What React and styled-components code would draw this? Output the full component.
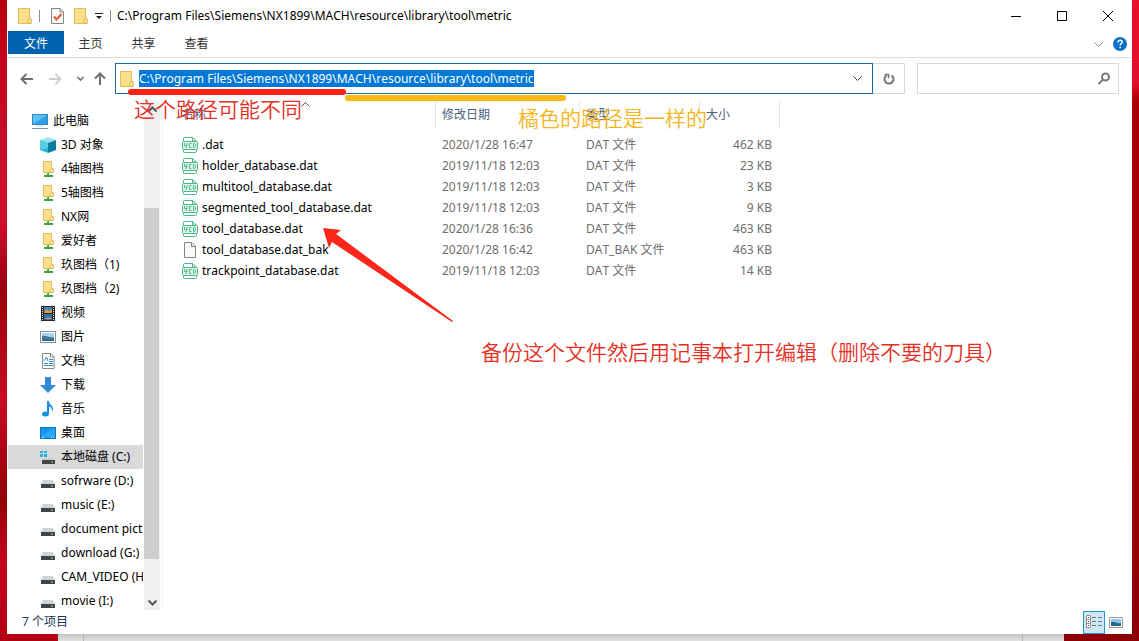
import { useState } from "react";
import styled, { createGlobalStyle } from "styled-components";

const PATH = "C:\\Program Files\\Siemens\\NX1899\\MACH\\resource\\library\\tool\\metric";

const GlobalStyle = createGlobalStyle`
  * {
    box-sizing: border-box;
  }
  body {
    margin: 0;
    font-family: "Noto Sans", "Noto Sans CJK SC", sans-serif;
    font-size: 12px;
    line-height: 16px;
    font-kerning: none;
    color: #000;
  }
  button,
  input {
    font: inherit;
    font-kerning: none;
    color: inherit;
    border: 0;
    padding: 0;
    background: none;
  }
  svg {
    display: block;
    flex: none;
  }
`;

const Desktop = styled.div`
  position: relative;
  height: 100vh;
  overflow: hidden;
  display: flex;
  flex-direction: column;
  background:
    linear-gradient(#e8102a 0, #e0102a 84px, #ab0004 100px, #a80006 300px, #8c0004) right / 50% 100% no-repeat,
    linear-gradient(#b8000c 0, #c20418 60px, #c8102a 150px, #d0102c 220px, #98000c 290px, #c80c24 400px, #900008 500px, #c4041c 560px, #b40010) left / 50% 100% no-repeat;
`;

const Window = styled.main`
  flex: 1;
  min-height: 0;
  margin: 0 7px;
  padding: 0 1px;
  display: flex;
  flex-direction: column;
  background: #fff;
`;

const Behind = styled.div`
  height: 7px;
  margin: 0 75px 0 58px;
  background: linear-gradient(#c4c4c4, #e2e2e2);
  display: flex;
  justify-content: space-between;
  padding: 0 41px 0 25px;

  &::before,
  &::after {
    content: "";
    width: 1px;
    background: #b4b4b4;
  }
`;

const TitleBar = styled.header`
  height: 31px;
  display: flex;
  align-items: center;
  padding-left: 10px;
`;

const QuickAccess = styled.div`
  display: flex;
  align-items: center;
  gap: 7px;
  margin-right: 6px;
`;

const Separator = styled.span`
  width: 1px;
  height: 12px;
  background: #8c8c8c;
`;

const Title = styled.h1`
  flex: 1;
  margin: 0;
  font-size: 12px;
  font-weight: 400;
`;

const IconButton = styled.button`
  display: flex;
  align-items: center;
  justify-content: center;
  width: ${(props) => props.$w || 16}px;
  height: ${(props) => props.$h || 16}px;
`;

const Ribbon = styled.nav`
  height: 27px;
  display: flex;
  align-items: flex-start;
  border-bottom: 1px solid #d9dde0;
`;

const Tab = styled.button`
  width: ${(props) => (props.$active ? 56 : 53)}px;
  height: 23px;
  padding-top: 2px;
  background: ${(props) => (props.$active ? "#0063b1" : "transparent")};
  color: ${(props) => (props.$active ? "#fff" : "#333")};
`;

const RibbonTools = styled.div`
  margin-left: auto;
  height: 26px;
  display: flex;
  align-items: center;
  gap: 6px;
  padding-right: 3px;
`;

const Navigation = styled.div`
  display: flex;
  align-items: center;
  padding: 5px 12px 7px 11px;
`;

const Arrows = styled.div`
  display: flex;
  align-items: center;
  width: 96px;
`;

const AddressBox = styled.div`
  flex: 1;
  min-width: 0;
  height: 31px;
  display: flex;
  align-items: center;
  padding: 0 7px 0 4px;
  gap: 5px;
  border: 1px solid #1d6aa8;

  button {
    margin-left: auto;
  }
`;

const AddressInput = styled.input`
  field-sizing: content;
  height: 17px;
  background: #0078d7;
  color: #fff;
  outline: none;
`;

const Refresh = styled.button`
  width: 32px;
  height: 31px;
  display: flex;
  align-items: center;
  justify-content: center;
  border: 1px solid #d9d9d9;
  border-left: 0;
`;

const SearchBox = styled.label`
  width: 202px;
  height: 31px;
  margin-left: 12px;
  padding: 0 7px;
  display: flex;
  align-items: center;
  border: 1px solid #d9d9d9;

  input {
    flex: 1;
    min-width: 0;
    outline: none;
  }
`;

const Content = styled.div`
  flex: 1;
  min-height: 0;
  display: flex;
`;

const Sidebar = styled.aside`
  display: flex;
  width: 155px;
  padding-right: 2px;
  border-right: 1px solid #f4f4f4;
`;

const Tree = styled.ul`
  flex: 1;
  min-width: 0;
  margin: 0;
  padding: 8px 0 0;
  overflow: hidden;
  list-style: none;
`;

const TreeItem = styled.li`
  height: 24px;
  display: flex;
  align-items: center;
  gap: 5px;
  margin-right: 1px;
  padding-left: ${(props) => (props.$root ? 24 : 32)}px;
  overflow: hidden;
  white-space: nowrap;
  background: ${(props) => (props.$selected ? "#d9d9d9" : "transparent")};
`;

const Scrollbar = styled.div`
  width: 16px;
  display: flex;
  flex-direction: column;
  background: #f0f0f0;
`;

const Track = styled.div`
  flex: 1;
  display: flex;
  flex-direction: column;

  &::before {
    content: "";
    flex: 91;
  }
  &::after {
    content: "";
    flex: 35;
  }
`;

const Thumb = styled.div`
  flex: 351;
  margin-right: 1px;
  background: #cdcdcd;
`;

const Files = styled.section`
  flex: 1;
  min-width: 0;
  padding-left: 19px;
  overflow: hidden;
`;

const FileTable = styled.table`
  width: 598px;
  table-layout: fixed;
  border-collapse: separate;
  border-spacing: 0;
  color: #6d6d6d;

  th,
  td {
    padding: 0 8px 0 6px;
    font-weight: 400;
    text-align: left;
    white-space: nowrap;
  }
  th {
    height: 28px;
    color: #4c607a;
    border-right: 1px solid #e5e5e5;
  }
  th:first-child,
  td:first-child {
    padding-left: 0;
  }
  td {
    height: 21px;
  }
  td:last-child {
    text-align: right;
  }
  tbody::before {
    content: "";
    display: block;
    height: 5px;
  }
`;

const SortHead = styled.span`
  position: relative;
  display: block;

  svg {
    position: absolute;
    left: 119px;
    top: -7px;
  }
`;

const FileName = styled.span`
  display: flex;
  align-items: center;
  gap: 4px;
  color: #000;
`;

const StatusBar = styled.footer`
  height: 24px;
  display: flex;
  align-items: center;
  padding: 0 4px 0 14px;
  color: #1e395b;
`;

const Views = styled.div`
  margin-left: auto;
  display: flex;
  align-items: center;
`;

const ViewButton = styled.button`
  width: 22px;
  height: 23px;
  display: flex;
  align-items: center;
  justify-content: center;
  border: 1px solid ${(props) => (props.$active ? "#2a94cf" : "transparent")};
  background: ${(props) => (props.$active ? "#cce8f6" : "transparent")};
`;

// hand-drawn marks over the window
const Note = styled.p`
  position: absolute;
  left: ${(props) => props.$x}px;
  top: ${(props) => props.$y}px;
  margin: 0;
  font-family: "Noto Sans CJK SC", sans-serif;
  font-weight: 350;
  font-size: 21px;
  line-height: 28px;
  white-space: nowrap;
  color: ${(props) => props.$color};
  pointer-events: none;
`;

const Underline = styled.div`
  position: absolute;
  left: ${(props) => props.$x}px;
  top: ${(props) => props.$y}px;
  width: ${(props) => props.$w}px;
  height: 6px;
  border-radius: 3px;
  background: ${(props) => props.$color};
  pointer-events: none;
`;

const ArrowMark = styled.svg`
  position: absolute;
  left: 322px;
  top: 227px;
  pointer-events: none;
`;

const Folder = () => (
  <svg width="14" height="16" viewBox="0 0 14 16">
    <path d="M.5.5h11v10h1.5v5H.5z" fill="#fbe08c" stroke="#e5bd55" />
    <path d="M11.5 10.500c-1.500 0-1.500 1-1.500 2v3h3v-4.500z" fill="#ffedae" stroke="#dfb349" />
  </svg>
);

const CheckDoc = () => (
  <svg width="13" height="16" viewBox="0 0 13 16">
    <path d="M.5.5h8.500l3.500 3.500v11.500H.5z" fill="#fafafa" stroke="#858585" />
    <path d="M9 .5V4h3.500" fill="none" stroke="#858585" />
    <path d="M3 8.500l2.500 3L10.500 6" fill="none" stroke="#e05a35" strokeWidth="2" />
  </svg>
);

const Chevron = ({ size = 9, dir = "down", color = "#555", width = 1 }) => (
  <svg width={size} height={size} viewBox="0 0 9 9">
    <path
      d={dir === "down" ? "M.5 2.500l4 4 4-4" : "M.5 6.500l4-4 4 4"}
      fill="none"
      stroke={color}
      strokeWidth={width}
    />
  </svg>
);

const NavArrow = ({ turn = 0, color = "#707070" }) => (
  <svg width="14" height="14" viewBox="0 0 14 14">
    <path
      d="M13 7H2M6.500 2L1.500 7l5 5"
      fill="none"
      stroke={color}
      strokeWidth="2"
      transform={`rotate(${turn} 7 7)`}
    />
  </svg>
);

const shapes = {
  pc: (
    <>
      <rect x=".5" y="1.500" width="15" height="10" fill="#59c3f5" stroke="#3586b8" />
      <path d="M1 11L15 2v9z" fill="#2c9fe6" />
      <path d="M5 13h6" stroke="#c5d5df" />
      <path d="M0 15.500h16" stroke="#7895a6" />
    </>
  ),
  cube: (
    <>
      <path d="M0 3l8-3 8 3-8 3z" fill="#9fe6f1" />
      <path d="M0 3l8 3v10l-8-3z" fill="#29b6d8" />
      <path d="M16 3L8 6v10l8-3z" fill="#087f9e" />
      <path d="M0 3l8 3v5L0 13z" fill="#58cee4" />
    </>
  ),
  netFolder: (
    <>
      <path d="M3.500.5h8v7h1.500v4H3.500z" fill="#fbe08c" stroke="#e3bb54" />
      <path d="M11 7.500h2v4h-3v-3z" fill="#ffedae" stroke="#dfb349" />
      <path d="M8 12v2" stroke="#48a653" strokeWidth="2" />
      <path d="M4 15h9" stroke="#36a345" strokeWidth="2" />
    </>
  ),
  video: (
    <>
      <rect x="1" y="1" width="14" height="15" fill="#262626" />
      <path d="M4 2h8v6H4z" fill="#4a7fc0" />
      <path d="M4 9h8v6H4z" fill="#3b6db4" />
      <path d="M4 7l3-3 2 2 3-2v4H4zM5 14l3-2 4 2z" fill="#cda339" />
      <path d="M2.500 2v13M13.500 2v13" stroke="#ddd" strokeDasharray="1 1" />
    </>
  ),
  image: (
    <>
      <rect x=".5" y="2.500" width="15" height="11" fill="#fff" stroke="#8c9298" />
      <path d="M2 4h12v8H2z" fill="#a5d5f0" />
      <path d="M2 7c4-1 7 2 12 1v4H2z" fill="#447b91" />
      <path d="M2 10.500h12V12H2z" fill="#28658f" />
    </>
  ),
  document: (
    <>
      <path d="M2.500.5h8.500l3 3v12H2.500z" fill="#fff" stroke="#87898c" />
      <path d="M10.500.5V4H14" fill="none" stroke="#87898c" />
      <path d="M4 8l2.500-4L8 8M9 6.500h4M9 8.500h4M4 10.500h4M9 10.500h4M4 12.500h9" fill="none" stroke="#348cc0" />
    </>
  ),
  download: <path d="M5 0h6v8h5l-8 8-8-8h5z" fill="#318bd7" />,
  music: (
    <>
      <ellipse cx="5.500" cy="13" rx="3.500" ry="2.500" fill="#188fe0" />
      <path d="M7 0h2c0 4 4 4 4 8 0 1-.5 2.500-1 3 0-4-1-5-3-5.500V13H7z" fill="#188fe0" />
    </>
  ),
  desktop: (
    <>
      <rect x=".5" y="2.500" width="15" height="11" fill="#1596ef" stroke="#0878bb" />
      <path d="M1 12L14 3h1v9z" fill="#28a9f8" />
      <path d="M2 12.500h2M11 12.500h1M13 12.500h1" stroke="#c5ecff" />
    </>
  ),
  system: (
    <>
      <path d="M0 2h3v2H0zM4 2h3v2H4zM0 5h3v3H0zM4 5h3v3H4z" fill="#20b4e8" />
      <path d="M4 9h9l2 2H2z" fill="#c9cccf" />
      <path d="M2 11h13v4H2z" fill="#3f4548" />
      <path d="M11 13h2" stroke="#75e76b" />
    </>
  ),
  drive: (
    <>
      <path d="M3 7h10l2 4H1z" fill="#d1d3d5" />
      <path d="M1 11h14v4H1z" fill="#3d4346" />
      <path d="M11 13h2" stroke="#79ec6d" />
    </>
  ),
};

const Icon = ({ name }) => (
  <svg width="16" height="16" viewBox="0 0 16 16">
    {shapes[name]}
  </svg>
);

const FileIcon = ({ plain }) =>
  plain ? (
    <svg width="16" height="16" viewBox="0 0 16 16">
      <path d="M2.500.5H10l3.500 3.500v11.500h-11z" fill="#fafafa" stroke="#858585" />
      <path d="M9.500.5v4h4" fill="#e4e4e4" stroke="#858585" />
    </svg>
  ) : (
    <svg width="16" height="16" viewBox="0 0 16 16" fill="none" stroke="#4fb889">
      <path d="M1.500 4V1.500q0-1 1-1h8L14.500 4M10.500.5V4h4M1.500 12v2.500q0 1 1 1h11q1 0 1-1V12" />
      <rect x=".5" y="4.500" width="15" height="8" rx="1" fill="#e0f5ea" />
      <path d="M2.500 6v2.500h2.500V6M5 8.500L3.500 11M9.500 6.500h-2v4h2M11.500 6.500h1l1 1v2l-1 1h-1z" />
    </svg>
  );

const treeItems = [
  { icon: "pc", label: "此电脑", root: true },
  { icon: "cube", label: "3D 对象" },
  { icon: "netFolder", label: "4轴图档" },
  { icon: "netFolder", label: "5轴图档" },
  { icon: "netFolder", label: "NX网" },
  { icon: "netFolder", label: "爱好者" },
  { icon: "netFolder", label: "玖图档（1)" },
  { icon: "netFolder", label: "玖图档（2)" },
  { icon: "video", label: "视频" },
  { icon: "image", label: "图片" },
  { icon: "document", label: "文档" },
  { icon: "download", label: "下载" },
  { icon: "music", label: "音乐" },
  { icon: "desktop", label: "桌面" },
  { icon: "system", label: "本地磁盘 (C:)", selected: true },
  { icon: "drive", label: "sofrware (D:)" },
  { icon: "drive", label: "music (E:)" },
  { icon: "drive", label: "document pict" },
  { icon: "drive", label: "download (G:)" },
  { icon: "drive", label: "CAM_VIDEO (H:)" },
  { icon: "drive", label: "movie (I:)" },
];

const files = [
  [".dat", "2020/1/28 16:47", "DAT 文件", "462 KB"],
  ["holder_database.dat", "2019/11/18 12:03", "DAT 文件", "23 KB"],
  ["multitool_database.dat", "2019/11/18 12:03", "DAT 文件", "3 KB"],
  ["segmented_tool_database.dat", "2019/11/18 12:03", "DAT 文件", "9 KB"],
  ["tool_database.dat", "2020/1/28 16:36", "DAT 文件", "463 KB"],
  ["tool_database.dat_bak", "2020/1/28 16:42", "DAT_BAK 文件", "463 KB"],
  ["trackpoint_database.dat", "2019/11/18 12:03", "DAT 文件", "14 KB"],
];

const App = () => {
  const [path, setPath] = useState(PATH);

  return (
    <Desktop>
      <GlobalStyle />
      <Window>
        <TitleBar>
          <QuickAccess>
            <Folder />
            <Separator />
            <IconButton aria-label="属性" $w={20}>
              <CheckDoc />
            </IconButton>
            <IconButton aria-label="新建文件夹" $w={14}>
              <Folder />
            </IconButton>
            <IconButton aria-label="自定义快速访问工具栏" $w={8}>
              <svg width="8" height="8" viewBox="0 0 8 8">
                <path d="M0 1.500h8" stroke="#222" />
                <path d="M1 4h6L4 7z" fill="#222" />
              </svg>
            </IconButton>
            <Separator />
          </QuickAccess>
          <Title>{PATH}</Title>
          <IconButton aria-label="最小化" $w={46} $h={31}>
            <svg width="10" height="10" viewBox="0 0 10 10">
              <path d="M0 5.500h10" stroke="#000" />
            </svg>
          </IconButton>
          <IconButton aria-label="最大化" $w={46} $h={31}>
            <svg width="10" height="10" viewBox="0 0 10 10">
              <path d="M.5.5h9v9h-9z" fill="none" stroke="#000" />
            </svg>
          </IconButton>
          <IconButton aria-label="关闭" $w={46} $h={31}>
            <svg width="10" height="10" viewBox="0 0 10 10">
              <path d="M0 0l10 10M10 0L0 10" stroke="#000" />
            </svg>
          </IconButton>
        </TitleBar>

        <Ribbon>
          <Tab $active>文件</Tab>
          <Tab>主页</Tab>
          <Tab>共享</Tab>
          <Tab>查看</Tab>
          <RibbonTools>
            <IconButton aria-label="展开功能区">
              <Chevron color="#888" />
            </IconButton>
            <IconButton aria-label="帮助">
              <svg width="14" height="14" viewBox="0 0 14 14">
                <circle cx="7" cy="7" r="7" fill="#0b70c9" />
                <path
                  d="M5 5.500C5 2.500 9.500 2.700 9.200 5.200 9 6.500 7.200 6.500 7.200 8.500M7.200 9.700v1.600"
                  fill="none"
                  stroke="#fff"
                  strokeWidth="1.500"
                />
              </svg>
            </IconButton>
          </RibbonTools>
        </Ribbon>

        <Navigation>
          <Arrows>
            <IconButton aria-label="后退">
              <NavArrow />
            </IconButton>
            <IconButton aria-label="前进" $w={44}>
              <NavArrow turn={180} color="#d0d0d0" />
            </IconButton>
            <IconButton aria-label="最近位置" $w={8}>
              <Chevron size={7} width={2} color="#777" />
            </IconButton>
            <IconButton aria-label="上移" $w={32}>
              <NavArrow turn={90} />
            </IconButton>
          </Arrows>
          <AddressBox>
            <Folder />
            <AddressInput
              aria-label="地址"
              value={path}
              onChange={(e) => setPath(e.target.value)}
            />
            <IconButton aria-label="以前的位置">
              <Chevron color="#444" />
            </IconButton>
          </AddressBox>
          <Refresh aria-label="刷新">
            <svg width="12" height="12" viewBox="0 0 12 12" fill="none" stroke="#777">
              <path d="M8.500 2.300a4.500 4.500 0 1 1-5 0" strokeWidth="2" />
              <path d="M1.500 1.500h4V5.500" strokeWidth="1.500" />
            </svg>
          </Refresh>
          <SearchBox>
            <input type="text" aria-label="搜索" />
            <svg width="14" height="14" viewBox="0 0 14 14" fill="none" stroke="#777">
              <circle cx="8.500" cy="5" r="3.500" strokeWidth="2" />
              <path d="M6 7.500L1.500 12" strokeWidth="2" />
            </svg>
          </SearchBox>
        </Navigation>

        <Content>
          <Sidebar>
            <Tree>
              {treeItems.map((item) => (
                <TreeItem key={item.label} $root={item.root} $selected={item.selected}>
                  <Icon name={item.icon} />
                  {item.label}
                </TreeItem>
              ))}
            </Tree>
            <Scrollbar>
              <IconButton aria-label="向上滚动">
                <Chevron dir="up" width={2} />
              </IconButton>
              <Track>
                <Thumb />
              </Track>
              <IconButton aria-label="向下滚动">
                <Chevron width={2} />
              </IconButton>
            </Scrollbar>
          </Sidebar>

          <Files>
            <FileTable>
              <colgroup>
                <col width="254" />
                <col width="144" />
                <col width="120" />
                <col width="80" />
              </colgroup>
              <thead>
                <tr>
                  <th>
                    <SortHead>
                      名称
                      <Chevron dir="up" />
                    </SortHead>
                  </th>
                  <th>修改日期</th>
                  <th>类型</th>
                  <th>大小</th>
                </tr>
              </thead>
              <tbody>
                {files.map(([name, date, type, size]) => (
                  <tr key={name}>
                    <td>
                      <FileName>
                        <FileIcon plain={type.startsWith("DAT_BAK")} />
                        {name}
                      </FileName>
                    </td>
                    <td>{date}</td>
                    <td>{type}</td>
                    <td>{size}</td>
                  </tr>
                ))}
              </tbody>
            </FileTable>
          </Files>
        </Content>

        <StatusBar>
          7 个项目
          <Views>
            <ViewButton $active aria-label="详细信息">
              <svg width="16" height="14" viewBox="0 0 16 14" fill="none">
                <path d="M.5.5h4v12h-4zM.5 4.500h4M.5 8.500h4" fill="#fff" stroke="#9a8f8f" />
                <path d="M2 2.500h1M2 6.500h1M2 10.500h1" stroke="#333" />
                <path d="M6 2.500h4M12 2.500h4M6 6.500h4M12 6.500h4M6 10.500h4M12 10.500h4" stroke="#777" />
              </svg>
            </ViewButton>
            <ViewButton aria-label="大图标">
              <svg width="14" height="11" viewBox="0 0 14 11">
                <path d="M.5.5h13v10H.5z" fill="#fff" stroke="#999" />
                <path d="M2 2h10v7H2z" fill="#8fc5ee" />
                <path d="M2 5c3-1 6 2 10 1v3H2z" fill="#2d668c" />
              </svg>
            </ViewButton>
          </Views>
        </StatusBar>
      </Window>
      <Behind />

      <Underline $x={128} $y={89} $w={218} $color="#fb2015" />
      <Underline $x={345} $y={95} $w={221} $color="#fbb90b" />
      <Note $x={134} $y={94} $color="#e62e22">
        这个路径可能不同
      </Note>
      <Note $x={518} $y={103} $color="#f5b51b">
        橘色的路径是一样的
      </Note>
      <Note $x={481} $y={337} $color="#e62e22">
        备份这个文件然后用记事本打开编辑（删除不要的刀具）
      </Note>
      <ArrowMark width="132" height="96" viewBox="0 0 132 96">
        <path d="M1 1l18 2-5 4L131 94l-1 1L10 15l-3 6z" fill="#fb2519" />
      </ArrowMark>
    </Desktop>
  );
};

export default App;
